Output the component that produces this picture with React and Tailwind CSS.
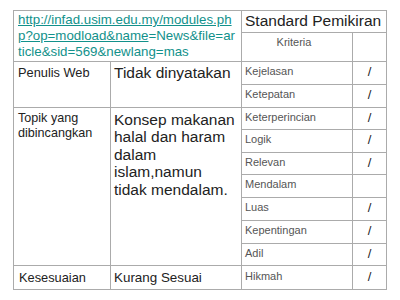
import React from "react";

const criteria = [
  ["Kejelasan", "/"],
  ["Ketepatan", "/"],
  ["Keterperincian", "/"],
  ["Logik", "/"],
  ["Relevan", "/"],
  ["Mendalam", ""],
  ["Luas", "/"],
  ["Kepentingan", "/"],
  ["Adil", "/"],
  ["Hikmah", "/"],
];

function Crit({ name, mark }) {
  return (
    <>
      <div className="bg-white flex items-center pl-[3px] pb-[3px] text-[11px] text-[#555]">
        {name}
      </div>
      <div className="bg-white flex items-center justify-center pb-[2px] text-[13px] text-[#222]">
        {mark}
      </div>
    </>
  );
}

export default function App() {
  return (
    <div className="w-[400px] h-[300px] bg-white pt-[10px] pl-[13px]" style={{ fontFamily: '"Liberation Sans", Arial, sans-serif' }}>
      <div className="grid w-max bg-[#ababab] gap-px p-px grid-cols-[96px_130px_110px_33px] grid-rows-[21px_28px_22px_22px_21px_22px_21px_22px_22px_22px_21px_23px]">
        {/* URL */}
        <div className="bg-white col-span-2 row-span-2 pl-[4px] pt-[1px] text-[13.3px] leading-[16px] text-[#12918b]">
          <span className="underline">http://infad.usim.edu.my/modules.ph</span>
          <br />
          <span className="underline">p?op=modload&amp;name</span>=News&amp;file=ar
          <br />
          ticle&amp;sid=569&amp;newlang=mas
        </div>
        <div className="bg-white col-span-2 pl-[3px] text-[15.5px] leading-[20px] text-[#222]">
          Standard Pemikiran
        </div>
        <div className="bg-white text-center pr-[6px] pt-[2px] text-[11px] leading-[14px] text-[#555]">
          Kriteria
        </div>
        <div className="bg-white"></div>

        {/* Penulis Web */}
        <div className="bg-white row-span-2 pl-[4px] pt-[3px] text-[12.8px] leading-[15px] text-[#222]">
          Penulis Web
        </div>
        <div className="bg-white row-span-2 pl-[3px] pt-[2px] text-[15.5px] leading-[18px] text-[#222]">
          Tidak dinyatakan
        </div>
        <Crit name={criteria[0][0]} mark={criteria[0][1]} />
        <Crit name={criteria[1][0]} mark={criteria[1][1]} />

        {/* Topik */}
        <div className="bg-white row-span-7 pl-[4px] pt-[3px] text-[12.6px] leading-[15px] text-[#222]">
          Topik yang
          <br />
          dibincangkan
        </div>
        <div className="bg-white row-span-7 pl-[3px] pt-[3px] text-[15.5px] leading-[17.4px] text-[#222]">
          Konsep makanan
          <br />
          halal dan haram
          <br />
          dalam
          <br />
          islam,namun
          <br />
          tidak mendalam.
        </div>
        {criteria.slice(2, 9).map(([n, m]) => (
          <Crit key={n} name={n} mark={m} />
        ))}

        {/* Kesesuaian */}
        <div className="bg-white flex items-center pl-[5px] pt-[1px] text-[12.8px] text-[#222]">
          Kesesuaian
        </div>
        <div className="bg-white flex items-center pl-[3px] pt-[1px] text-[13.4px] text-[#222]">
          Kurang Sesuai
        </div>
        <Crit name={criteria[9][0]} mark={criteria[9][1]} />
      </div>
    </div>
  );
}
